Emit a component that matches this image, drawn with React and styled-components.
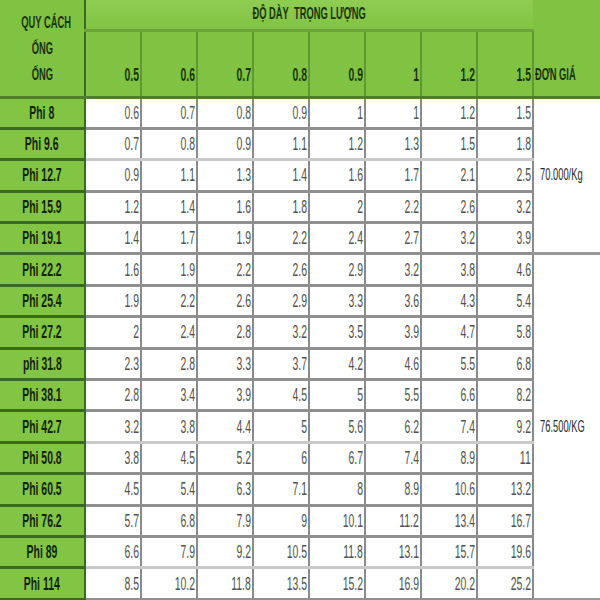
import React from "react";
import styled, { createGlobalStyle } from "styled-components";

const GlobalStyle = createGlobalStyle`
  html, body {
    margin: 0;
    padding: 0;
    background: #ffffff;
    overflow: hidden;
  }
  body {
    font-family: "Liberation Sans", "Noto Sans", sans-serif;
  }
`;

const Sheet = styled.table`
  width: 600px;
  border-collapse: collapse;
  table-layout: fixed;
  font-size: 18px;
  line-height: 18px;
`;

const Narrow = styled.span`
  display: inline-block;
  white-space: nowrap;
  transform: scaleX(${({ $scale }) => $scale || 0.58});
  transform-origin: ${({ $origin }) => $origin || "center"} center;
`;

const HeadRow = styled.tr`
  height: ${({ $h }) => $h}px;
`;

const HeadCell = styled.th`
  background: #80c342;
  color: #1a330d;
  font-weight: bold;
  font-size: ${({ $size }) => $size || 17}px;
  padding: 0 1px 8px 1px;
  vertical-align: bottom;
  text-align: ${({ $align }) => $align || "center"};
  border-right: 2px solid ${({ $line }) => $line || "#5f9a31"};
  border-bottom: 3px solid #4f7d2a;
  line-height: 26px;
`;

const GroupCell = styled.th`
  background: linear-gradient(#8fcd52, #80c342);
  color: #1a330d;
  font-weight: bold;
  font-size: 17px;
  padding: 0;
  vertical-align: middle;
  border-bottom: 3px solid #6aa33a;
`;

const Row = styled.tr`
  height: 31.4px;
`;

const NameCell = styled.td`
  background: #82c443;
  color: #10240a;
  font-weight: bold;
  font-size: 19px;
  text-align: center;
  border-bottom: 3px solid #3a6a22;
  border-right: 2px solid #3a6a22;
  padding: 0;
`;

const ValueCell = styled.td`
  color: #505050;
  text-align: right;
  padding: 0 1px 0 0;
  border-right: 2px solid #8a8a8a;
  border-bottom: 3px solid ${({ $light }) => ($light ? "#c9c9c9" : "#8f8f8f")};
`;

const PriceCell = styled.td`
  color: #2a2a2a;
  font-size: 17px;
  vertical-align: middle;
  padding: 0 0 0 6px;
  border-bottom: 3px solid #999999;
`;

const sizes = ["0.5", "0.6", "0.7", "0.8", "0.9", "1", "1.2", "1.5"];

const rows = [
  ["Phi 8", "0.6", "0.7", "0.8", "0.9", "1", "1", "1.2", "1.5"],
  ["Phi 9.6", "0.7", "0.8", "0.9", "1.1", "1.2", "1.3", "1.5", "1.8"],
  ["Phi 12.7", "0.9", "1.1", "1.3", "1.4", "1.6", "1.7", "2.1", "2.5"],
  ["Phi 15.9", "1.2", "1.4", "1.6", "1.8", "2", "2.2", "2.6", "3.2"],
  ["Phi 19.1", "1.4", "1.7", "1.9", "2.2", "2.4", "2.7", "3.2", "3.9"],
  ["Phi 22.2", "1.6", "1.9", "2.2", "2.6", "2.9", "3.2", "3.8", "4.6"],
  ["Phi 25.4", "1.9", "2.2", "2.6", "2.9", "3.3", "3.6", "4.3", "5.4"],
  ["Phi 27.2", "2", "2.4", "2.8", "3.2", "3.5", "3.9", "4.7", "5.8"],
  ["phi 31.8", "2.3", "2.8", "3.3", "3.7", "4.2", "4.6", "5.5", "6.8"],
  ["Phi 38.1", "2.8", "3.4", "3.9", "4.5", "5", "5.5", "6.6", "8.2"],
  ["Phi 42.7", "3.2", "3.8", "4.4", "5", "5.6", "6.2", "7.4", "9.2"],
  ["Phi 50.8", "3.8", "4.5", "5.2", "6", "6.7", "7.4", "8.9", "11"],
  ["Phi 60.5", "4.5", "5.4", "6.3", "7.1", "8", "8.9", "10.6", "13.2"],
  ["Phi 76.2", "5.7", "6.8", "7.9", "9", "10.1", "11.2", "13.4", "16.7"],
  ["Phi 89", "6.6", "7.9", "9.2", "10.5", "11.8", "13.1", "15.7", "19.6"],
  ["Phi 114", "8.5", "10.2", "11.8", "13.5", "15.2", "16.9", "20.2", "25.2"],
];

const lightRows = [1, 10, 14];

const PipeTable = () => (
  <Sheet>
    <colgroup>
      <col style={{ width: "85px" }} />
      {sizes.map((s) => (
        <col key={s} style={{ width: "56px" }} />
      ))}
      <col style={{ width: "67px" }} />
    </colgroup>
    <thead>
      <HeadRow $h={30}>
        <HeadCell rowSpan={2} $line="#3a6a22">
          <Narrow $scale={0.55}>QUY CÁCH</Narrow>
          <br />
          <Narrow $scale={0.55}>ỐNG</Narrow>
          <br />
          <Narrow $scale={0.55}>ỐNG</Narrow>
        </HeadCell>
        <GroupCell colSpan={8}>
          <Narrow $scale={0.55}>ĐỘ DÀY&nbsp;&nbsp;TRỌNG LƯỢNG</Narrow>
        </GroupCell>
        <HeadCell rowSpan={2} $align="left" $line="transparent">
          <Narrow $scale={0.55} $origin="left">
            ĐƠN GIÁ
          </Narrow>
        </HeadCell>
      </HeadRow>
      <HeadRow $h={67}>
        {sizes.map((s) => (
          <HeadCell key={s} $align="right" $size={18}>
            <Narrow $origin="right">{s}</Narrow>
          </HeadCell>
        ))}
      </HeadRow>
    </thead>
    <tbody>
      {rows.map(([name, ...values], i) => (
        <Row key={name}>
          <NameCell>
            <Narrow $scale={0.55}>{name}</Narrow>
          </NameCell>
          {values.map((v, j) => (
            <ValueCell key={j} $light={lightRows.includes(i)}>
              <Narrow $origin="right">{v}</Narrow>
            </ValueCell>
          ))}
          {i === 0 && (
            <PriceCell rowSpan={5}>
              <Narrow $scale={0.55} $origin="left">
                70.000/Kg
              </Narrow>
            </PriceCell>
          )}
          {i === 5 && (
            <PriceCell rowSpan={11}>
              <Narrow $scale={0.55} $origin="left">
                76.500/KG
              </Narrow>
            </PriceCell>
          )}
        </Row>
      ))}
    </tbody>
  </Sheet>
);

export default function App() {
  return (
    <>
      <GlobalStyle />
      <PipeTable />
    </>
  );
}
